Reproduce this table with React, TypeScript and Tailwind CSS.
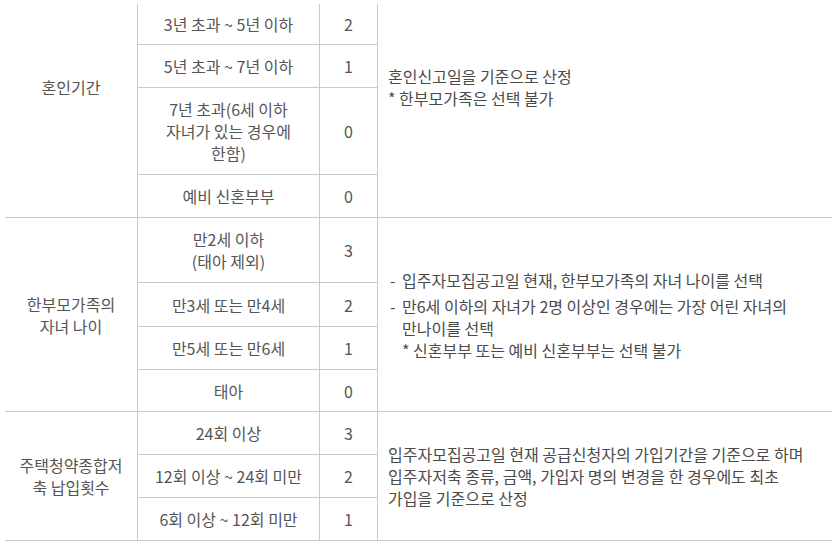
import React from "react";

type Row = { label: React.ReactNode; score: string; h: string; border: boolean };

const font = { fontFamily: '"Noto Sans CJK KR", "Noto Sans", sans-serif' };

function Section({
  title,
  rows,
  note,
  titleClass = "",
  noteClass = "",
}: {
  title: React.ReactNode;
  rows: Row[];
  note: React.ReactNode;
  titleClass?: string;
  noteClass?: string;
}) {
  return (
    <div className="flex border-b border-[#cacaca]">
      <div
        className={`w-[133px] shrink-0 border-r border-[#cacaca] flex items-center justify-center text-center ${titleClass}`}
      >
        {title}
      </div>
      <div className="flex flex-col w-[240px] shrink-0">
        {rows.map((r, i) => (
          <div
            key={i}
            className={`flex ${r.h} ${r.border ? "border-b border-[#cacaca]" : ""}`}
          >
            <div className="w-[182px] shrink-0 border-r border-[#cacaca] flex items-center justify-center text-center">
              <div>{r.label}</div>
            </div>
            <div className="w-[58px] shrink-0 border-r border-[#cacaca] flex items-center justify-center">
              {r.score}
            </div>
          </div>
        ))}
      </div>
      <div className={`flex-1 flex items-center pl-[10px] text-[#4a4a4a] ${noteClass}`}>
        <div>{note}</div>
      </div>
    </div>
  );
}

export default function App() {
  return (
    <div
      className="w-[838px] h-[545px] bg-white pt-[4px] pl-[5px] text-[16px] leading-[22px] text-[#555555]"
      style={font}
    >
      <div className="w-[827px]">
        <Section
          title="혼인기간"
          titleClass="pb-[47px]"
          noteClass="pb-[47px]"
          rows={[
            { label: "3년 초과 ~ 5년 이하", score: "2", h: "h-[41px]", border: true },
            { label: "5년 초과 ~ 7년 이하", score: "1", h: "h-[43px]", border: true },
            {
              label: (
                <>
                  7년 초과(6세 이하
                  <br />
                  자녀가 있는 경우에
                  <br />
                  한함)
                </>
              ),
              score: "0",
              h: "h-[87px]",
              border: true,
            },
            { label: "예비 신혼부부", score: "0", h: "h-[42px]", border: false },
          ]}
          note={
            <>
              혼인신고일을 기준으로 산정
              <br />* 한부모가족은 선택 불가
            </>
          }
        />
        <Section
          title={
            <div>
              한부모가족의
              <br />
              자녀 나이
            </div>
          }
          rows={[
            {
              label: (
                <>
                  만2세 이하
                  <br />
                  (태아 제외)
                </>
              ),
              score: "3",
              h: "h-[65px]",
              border: true,
            },
            { label: "만3세 또는 만4세", score: "2", h: "h-[44px]", border: true },
            { label: "만5세 또는 만6세", score: "1", h: "h-[43px]", border: true },
            { label: "태아", score: "0", h: "h-[41px]", border: false },
          ]}
          note={
            <ul className="flex flex-col gap-[4px]">
              <li className="flex">
                <span className="w-[14px] shrink-0 pl-[2px]">-</span>
                <span>입주자모집공고일 현재, 한부모가족의 자녀 나이를 선택</span>
              </li>
              <li className="flex">
                <span className="w-[14px] shrink-0 pl-[2px]">-</span>
                <span>
                  만6세 이하의 자녀가 2명 이상인 경우에는 가장 어린 자녀의
                  <br />
                  만나이를 선택
                  <br />* 신혼부부 또는 예비 신혼부부는 선택 불가
                </span>
              </li>
            </ul>
          }
        />
        <Section
          title={
            <div>
              주택청약종합저
              <br />축 납입횟수
            </div>
          }
          rows={[
            { label: "24회 이상", score: "3", h: "h-[43px]", border: true },
            { label: "12회 이상 ~ 24회 미만", score: "2", h: "h-[43px]", border: true },
            { label: "6회 이상 ~ 12회 미만", score: "1", h: "h-[42px]", border: false },
          ]}
          note={
            <>
              입주자모집공고일 현재 공급신청자의 가입기간을 기준으로 하며
              <br />
              입주자저축 종류, 금액, 가입자 명의 변경을 한 경우에도 최초
              <br />
              가입을 기준으로 산정
            </>
          }
        />
      </div>
    </div>
  );
}
